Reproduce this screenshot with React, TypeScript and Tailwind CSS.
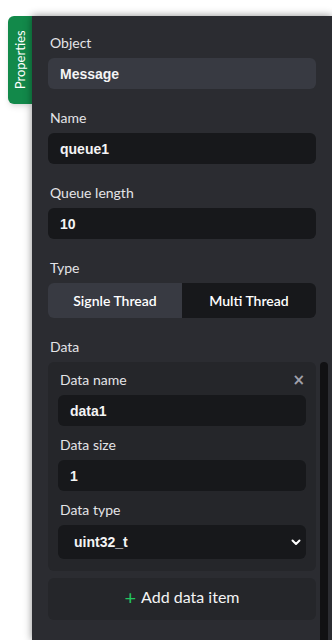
import React from "react";

const labelFont = { fontFamily: "Lato, 'Noto Sans', sans-serif" };

function Label({ children }: { children: React.ReactNode }) {
  return (
    <div className="h-5 leading-5 pl-[2px] text-[14px] text-[#e4e4e7]" style={labelFont}>
      {children}
    </div>
  );
}

function Field({ value, className = "" }: { value: string; className?: string }) {
  return (
    <div
      className={`h-[31px] rounded-md bg-[#17181b] flex items-center pt-px px-3 text-[14px] font-bold text-[#f4f4f5] ${className}`}
      style={{ fontFamily: "'Liberation Sans', Arial, sans-serif" }}
    >
      {value}
    </div>
  );
}

export default function App() {
  return (
    <div className="w-[332px] h-[640px] bg-white flex pt-4 overflow-hidden">
      <div className="ml-[8px] w-[24px] h-[88px] bg-[#12894a] rounded-l-md shadow-md flex items-center justify-center">
        <span
          className="text-white text-[13px] whitespace-nowrap -rotate-90"
          style={labelFont}
        >
          Properties
        </span>
      </div>
      <div className="flex-1 h-[624px] bg-[#2b2c31] shadow-[0_0_8px_rgba(0,0,0,0.45)] pt-[17px] pl-4 flex flex-col">
        <div className="pr-4 flex flex-col">
          <Label>Object</Label>
          <div
            className="mt-[5px] h-[31px] rounded-md bg-[#383a42] flex items-center pt-px px-3 text-[14px] font-bold text-[#f4f4f5]"
            style={{ fontFamily: "'Liberation Sans', Arial, sans-serif" }}
          >
            Message
          </div>
          <div className="mt-[19px]">
            <Label>Name</Label>
          </div>
          <Field value="queue1" className="mt-[5px]" />
          <div className="mt-[19px]">
            <Label>Queue length</Label>
          </div>
          <Field value="10" className="mt-[5px]" />
          <div className="mt-[19px]">
            <Label>Type</Label>
          </div>
          <div
            className="mt-[5px] h-[35px] rounded-md overflow-hidden flex text-[14px] font-semibold text-white"
            style={labelFont}
          >
            <div className="flex-1 bg-[#383a42] flex items-center justify-center">Signle Thread</div>
            <div className="flex-1 bg-[#17181b] flex items-center justify-center">Multi Thread</div>
          </div>
          <div className="mt-[19px]">
            <Label>Data</Label>
          </div>
        </div>
        <div className="mt-[5px] flex flex-1 gap-1 pr-1">
          <div className="w-[268px] flex flex-col">
            <div className="rounded-md bg-[#25262a] px-[10px] pt-2 pb-3 flex flex-col">
              <div className="flex items-center justify-between pr-[1px]">
                <Label>Data name</Label>
                <span
                  className="text-[#a1a1aa] text-[15px] font-bold leading-none"
                  style={{ fontFamily: "'DejaVu Sans', sans-serif" }}
                >
                  ×
                </span>
              </div>
              <Field value="data1" className="mt-[5px]" />
              <div className="mt-[9px]">
                <Label>Data size</Label>
              </div>
              <Field value="1" className="mt-[5px]" />
              <div className="mt-[9px]">
                <Label>Data type</Label>
              </div>
              <div
                className="mt-[5px] h-[34px] rounded-md bg-[#17181b] flex items-center justify-between pl-4 pr-[4px] text-[14px] font-bold text-[#f4f4f5]"
                style={{ fontFamily: "'Liberation Sans', Arial, sans-serif" }}
              >
                <span>uint32_t</span>
                <svg width="12" height="12" viewBox="0 0 12 12" fill="none">
                  <path d="M2.5 4.5L6 8L9.5 4.5" stroke="#ffffff" strokeWidth="2" strokeLinecap="round" strokeLinejoin="round" />
                </svg>
              </div>
            </div>
            <div
              className="mt-[7px] h-[42px] pb-1 rounded-md bg-[#25262a] flex items-center justify-center text-[16px] text-[#f4f4f5]"
              style={labelFont}
            >
              <span className="text-[#22c55e] text-[20px] mr-[5px] leading-none">+</span>
              Add data item
            </div>
          </div>
          <div className="w-2 rounded-t-sm bg-[#111113]" />
        </div>
      </div>
    </div>
  );
}
